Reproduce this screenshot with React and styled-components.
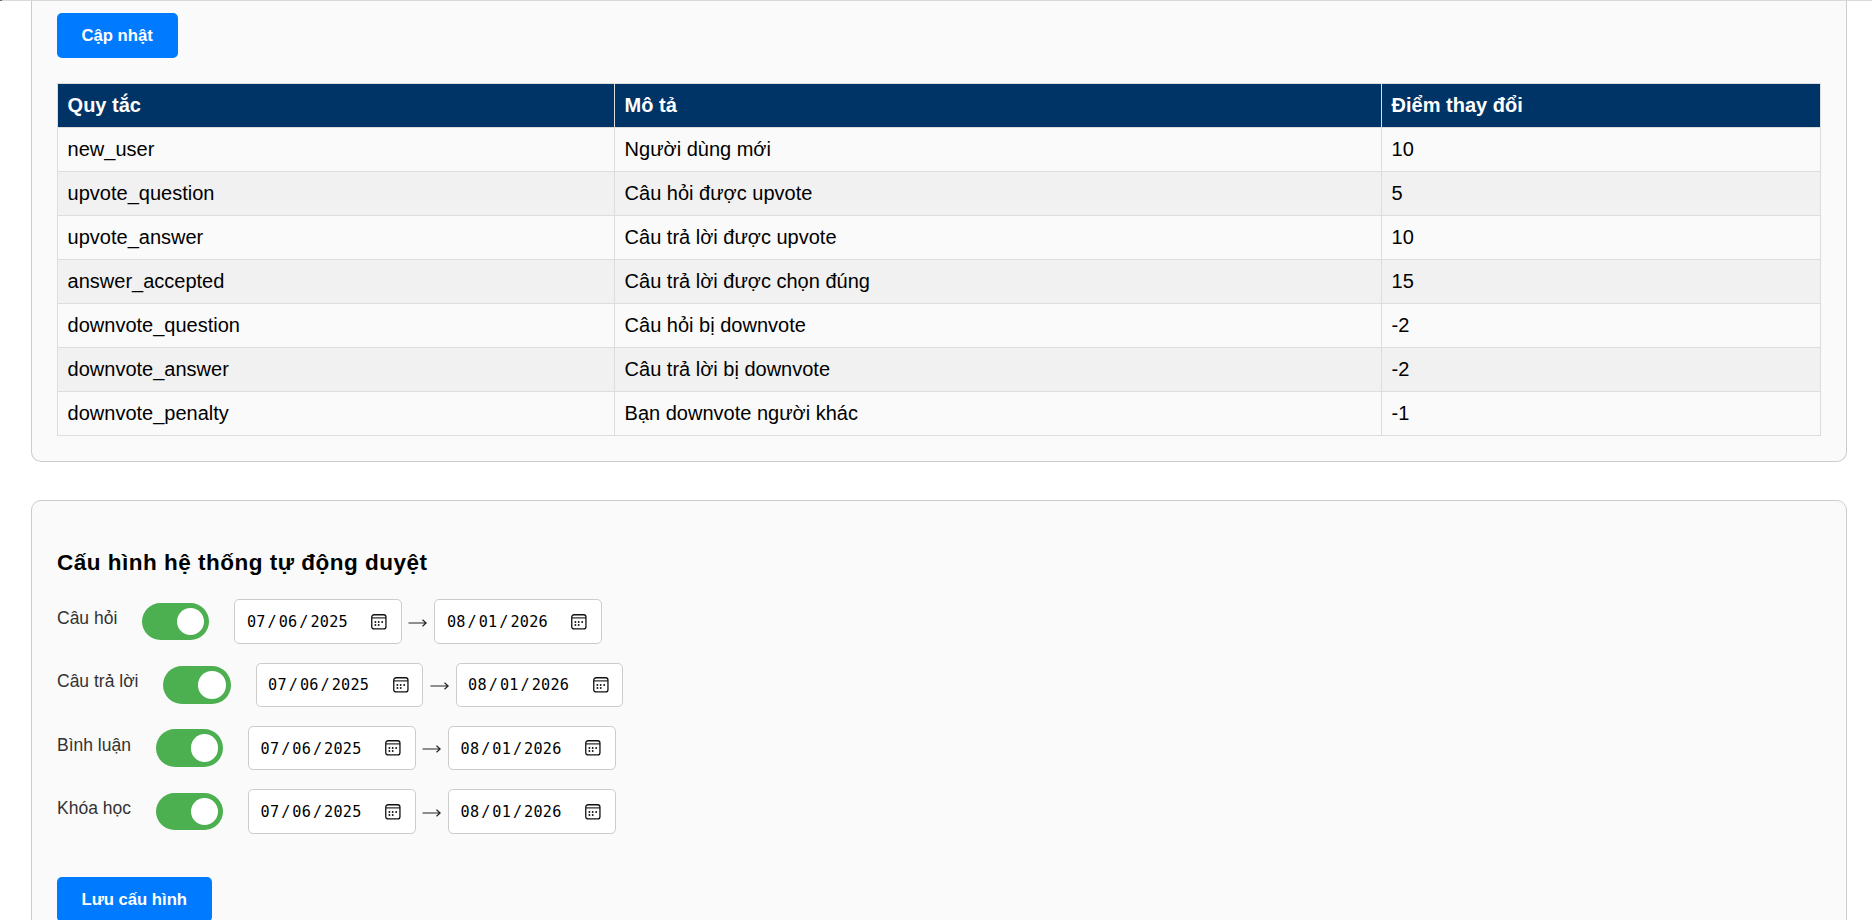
import React from 'react';
import styled, { createGlobalStyle } from 'styled-components';

const GlobalStyle = createGlobalStyle`
  * { box-sizing: border-box; }
  html, body { margin: 0; padding: 0; }
  body {
    height: 920px;
    overflow: hidden;
    background: #fff;
    color: #000;
    font: 20px/25px "Liberation Sans", Arial, sans-serif;
  }
`;

const Page = styled.main`
  height: 920px;
  overflow: hidden;
  display: flex;
  flex-direction: column;
  gap: 38px;
  padding: 0 25px 0 31px;
`;

const TopEdge = styled.div`
  position: absolute;
  top: 0;
  left: 0;
  width: 100%;
  height: 1px;
  background: linear-gradient(to right, #666 2px, #d9d9d9 2px);
`;

const Card = styled.section`
  flex: none;
  background: #fafafa;
  border: 1px solid #ccc;
  padding: 0 25px;
`;

const RulesCard = styled(Card)`
  height: 462px;
  padding-top: 13px;
  border-top: 0;
  border-radius: 0 0 10px 10px;
`;

const ConfigCard = styled(Card)`
  height: 480px;
  padding-top: 47px;
  border-radius: 10px 10px 0 0;
`;

const Button = styled.button`
  display: block;
  height: 45px;
  padding: 0 25px 0 24.5px;
  border: 0;
  border-radius: 5px;
  background: #007bff;
  color: #fff;
  font: bold 16.667px/20px "Liberation Sans", Arial, sans-serif;
`;

const Table = styled.table`
  width: 1764px;
  margin-top: 25px;
  table-layout: fixed;
  border-collapse: collapse;
`;

const Col = styled.col`
  width: ${(p) => p.$width}px;
`;

const HeadCell = styled.th`
  height: 44px;
  padding: 0 9.6px;
  border: 1px solid #ddd;
  background: #003366;
  color: #fff;
  text-align: left;
  line-height: 23px;
`;

const Row = styled.tr`
  &:nth-child(even) { background: #f1f1f1; }
`;

const Cell = styled.td`
  height: 44px;
  padding: 0 9.6px;
  border: 1px solid #ddd;
  line-height: 23px;
`;

const Title = styled.h3`
  margin: 0;
  height: 51px;
  font-size: 22.5px;
  line-height: 30px;
  letter-spacing: 0.5px;
`;

const Settings = styled.div`
  display: flex;
  flex-direction: column;
  gap: 18.35px;
  margin-bottom: 43px;
`;

const Setting = styled.div`
  display: flex;
  align-items: center;
  height: 45px;
`;

const Label = styled.label`
  margin-right: 24.6px;
  padding-bottom: 7px;
  color: #333;
  font-size: 17.5px;
  line-height: 20px;
`;

const Switch = styled.span`
  display: flex;
  align-items: center;
  justify-content: flex-end;
  width: 67.5px;
  height: 37.5px;
  margin-right: 25px;
  padding-right: 5px;
  border-radius: 19px;
  background: #4caf50;
`;

const Knob = styled.span`
  width: 27.5px;
  height: 27.5px;
  border-radius: 50%;
  background: #fff;
`;

const DateBox = styled.span`
  display: flex;
  align-items: center;
  justify-content: space-between;
  width: 167.5px;
  height: 44.5px;
  padding: 0 13.5px 0 11.5px;
  border: 1px solid #ccc;
  border-radius: 5px;
  background: #fff;
`;

const DateText = styled.span`
  display: flex;
  gap: 1.8px;
  padding-top: 1px;
  font: 15.2px/20px "DejaVu Sans Mono", monospace;
  letter-spacing: 0.24px;
`;

const Arrow = styled.svg`
  width: 19px;
  height: 8px;
  margin: 2px 7px 0 6.5px;
`;

const Icon = styled.svg`
  width: 16px;
  height: 16px;
`;

const rules = [
  ['new_user', 'Người dùng mới', '10'],
  ['upvote_question', 'Câu hỏi được upvote', '5'],
  ['upvote_answer', 'Câu trả lời được upvote', '10'],
  ['answer_accepted', 'Câu trả lời được chọn đúng', '15'],
  ['downvote_question', 'Câu hỏi bị downvote', '-2'],
  ['downvote_answer', 'Câu trả lời bị downvote', '-2'],
  ['downvote_penalty', 'Bạn downvote người khác', '-1'],
];

const settings = ['Câu hỏi', 'Câu trả lời', 'Bình luận', 'Khóa học'];

function CalendarIcon() {
  return (
    <Icon viewBox="0 0 16 16" fill="none" stroke="#111">
      <rect x="0.75" y="0.75" width="14.2" height="14.2" rx="2.3" strokeWidth="1.3" />
      <path d="M1 3.9h14" strokeWidth="1.1" />
      <g fill="#111" stroke="none">
        <circle cx="4.4" cy="8" r="0.95" />
        <circle cx="7.7" cy="8" r="0.95" />
        <circle cx="11.2" cy="8" r="0.95" />
        <circle cx="4.4" cy="11" r="0.95" />
        <circle cx="7.7" cy="11" r="0.95" />
      </g>
    </Icon>
  );
}

function DateField({ value }) {
  const [month, day, year] = value.split('/');
  return (
    <DateBox>
      <DateText>
        <span>{month}</span><span>/</span><span>{day}</span><span>/</span><span>{year}</span>
      </DateText>
      <CalendarIcon />
    </DateBox>
  );
}

export default function App() {
  return (
    <>
      <GlobalStyle />
      <Page>
        <RulesCard>
          <Button>Cập nhật</Button>
          <Table>
            <colgroup><Col $width={557} /><Col $width={767} /><Col $width={439} /></colgroup>
            <thead>
              <tr><HeadCell>Quy tắc</HeadCell><HeadCell>Mô tả</HeadCell><HeadCell>Điểm thay đổi</HeadCell></tr>
            </thead>
            <tbody>
              {rules.map(([rule, text, points]) => (
                <Row key={rule}><Cell>{rule}</Cell><Cell>{text}</Cell><Cell>{points}</Cell></Row>
              ))}
            </tbody>
          </Table>
        </RulesCard>
        <ConfigCard>
          <Title>Cấu hình hệ thống tự động duyệt</Title>
          <Settings>
            {settings.map((name) => (
              <Setting key={name}>
                <Label>{name}</Label>
                <Switch><Knob /></Switch>
                <DateField value="07/06/2025" />
                <Arrow viewBox="0 0 19 8" fill="none" stroke="#222" strokeWidth="1.2">
                  <path d="M0.5 4h17.5M14.5 0.8l3.7 3.2l-3.7 3.2" />
                </Arrow>
                <DateField value="08/01/2026" />
              </Setting>
            ))}
          </Settings>
          <Button>Lưu cấu hình</Button>
        </ConfigCard>
      </Page>
      <TopEdge />
    </>
  );
}
